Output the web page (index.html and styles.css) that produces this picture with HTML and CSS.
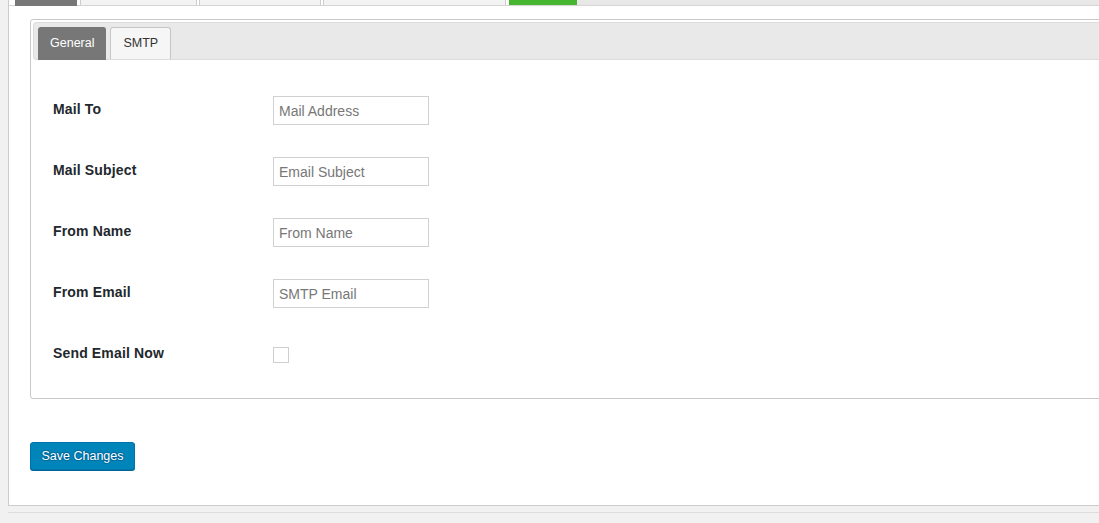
FILE: index.html
```html
<!DOCTYPE html>
<html>
<head>
<meta charset="utf-8">
<title>Mail Settings</title>
<link rel="stylesheet" href="styles.css">
</head>
<body>
<div class="wrap">
  <div class="nav">
    <span class="nav-tab nav-tab-dark w1"></span>
    <span class="nav-tab w2"></span>
    <span class="nav-tab w3"></span>
    <span class="nav-tab w4"></span>
    <span class="nav-tab nav-tab-green w5"></span>
    <span class="nav-fill"></span>
  </div>

  <div class="tabs-box">
    <ul class="tabs-header">
      <li class="tab tab-active">General</li>
      <li class="tab">SMTP</li>
    </ul>
    <div class="panel">
      <div class="row">
        <label class="row-label">Mail To</label>
        <input class="field" type="text" placeholder="Mail Address">
      </div>
      <div class="row">
        <label class="row-label">Mail Subject</label>
        <input class="field" type="text" placeholder="Email Subject">
      </div>
      <div class="row">
        <label class="row-label">From Name</label>
        <input class="field" type="text" placeholder="From Name">
      </div>
      <div class="row">
        <label class="row-label">From Email</label>
        <input class="field" type="text" placeholder="SMTP Email">
      </div>
      <div class="row">
        <label class="row-label">Send Email Now</label>
        <input class="check" type="checkbox">
      </div>
    </div>
  </div>

  <button class="btn-primary" type="button">Save Changes</button>
</div>
<div class="footer"></div>
</body>
</html>
```

FILE: styles.css
```css
html, body {
  margin: 0;
  padding: 0;
}
body {
  background: #f1f1f1;
  font-family: "Liberation Sans", Arial, sans-serif;
  color: #23282d;
  overflow: hidden;
}
.wrap {
  margin-left: 8px;
  width: 1300px;
  background: #fff;
  border-left: 1px solid #ccc;
  border-bottom: 1px solid #ccc;
  padding-bottom: 35px;
}
.nav {
  display: flex;
  height: 5px;
  border-bottom: 1px solid #d5d5d5;
  padding-left: 6px;
}
.nav-tab {
  display: block;
  height: 5px;
  background: #f3f3f3;
  border-left: 1px solid #ccc;
  border-right: 1px solid #ccc;
  box-sizing: border-box;
}
.nav-tab-dark {
  background: #777;
  border: none;
  height: 6px;
}
.nav-tab-green {
  background: #46b52f;
  border: none;
}
.w1 { width: 62px; margin-right: 3px; }
.w2 { width: 117px; margin-right: 2px; }
.w3 { width: 122px; margin-right: 2px; }
.w4 { width: 183px; margin-right: 3px; }
.w5 { width: 68px; }
.nav-fill {
  flex: 1;
  background: #e8e8e8;
}
.tabs-box {
  margin: 13px 0 0 21px;
  border: 1px solid #c8c8c8;
  border-radius: 3px;
  padding: 2px;
}
.tabs-header {
  list-style: none;
  margin: 0;
  display: flex;
  gap: 4px;
  padding: 4px 3px 0 4px;
  background: #e9e9e9;
  border: 1px solid #dcdcdc;
  border-radius: 3px;
}
.tab {
  height: 31px;
  line-height: 31px;
  padding: 0 12px;
  font-size: 12.5px;
  color: #333;
  background: #f6f6f6;
  border: 1px solid #c5c5c5;
  border-bottom: none;
  border-radius: 3px 3px 0 0;
}
.tab-active {
  background: #777;
  border-color: #777;
  color: #fff;
  padding: 0 11px 1px;
  margin-bottom: -1px;
}
.panel {
  display: flex;
  flex-direction: column;
  gap: 32px;
  padding: 36px 20px 27px;
}
.row {
  display: flex;
  align-items: flex-start;
  height: 29px;
}
.row-label {
  width: 220px;
  flex: none;
  padding-top: 4px;
  font-size: 14px;
  line-height: 18px;
  font-weight: bold;
  letter-spacing: 0.15px;
  color: #23282d;
}
.field {
  box-sizing: border-box;
  width: 156px;
  height: 29px;
  margin: 0;
  padding: 0 5px;
  border: 1px solid #d1d1d1;
  font-family: "Liberation Sans", Arial, sans-serif;
  font-size: 14px;
  color: #333;
  background: #fff;
}
.field::placeholder {
  color: #777;
}
.check {
  appearance: none;
  -webkit-appearance: none;
  box-sizing: border-box;
  width: 16px;
  height: 16px;
  margin: 7px 0 0;
  border: 1px solid #cfcfcf;
  background: #fff;
  border-radius: 0;
}
.btn-primary {
  display: block;
  margin: 43px 0 0 21px;
  box-sizing: border-box;
  height: 28px;
  padding: 0 10.5px 1px;
  font-family: "Liberation Sans", Arial, sans-serif;
  font-size: 12.5px;
  color: #fff;
  background: #0085ba;
  border: 1px solid #0073aa;
  border-radius: 3px;
  box-shadow: 0 1px 0 #006799;
  text-shadow: 0 -1px 1px #006799, 1px 0 1px #006799, 0 1px 1px #006799, -1px 0 1px #006799;
}
.footer {
  margin: 6px 0 0 8px;
  border-top: 1px solid #ddd;
  height: 20px;
}
```
